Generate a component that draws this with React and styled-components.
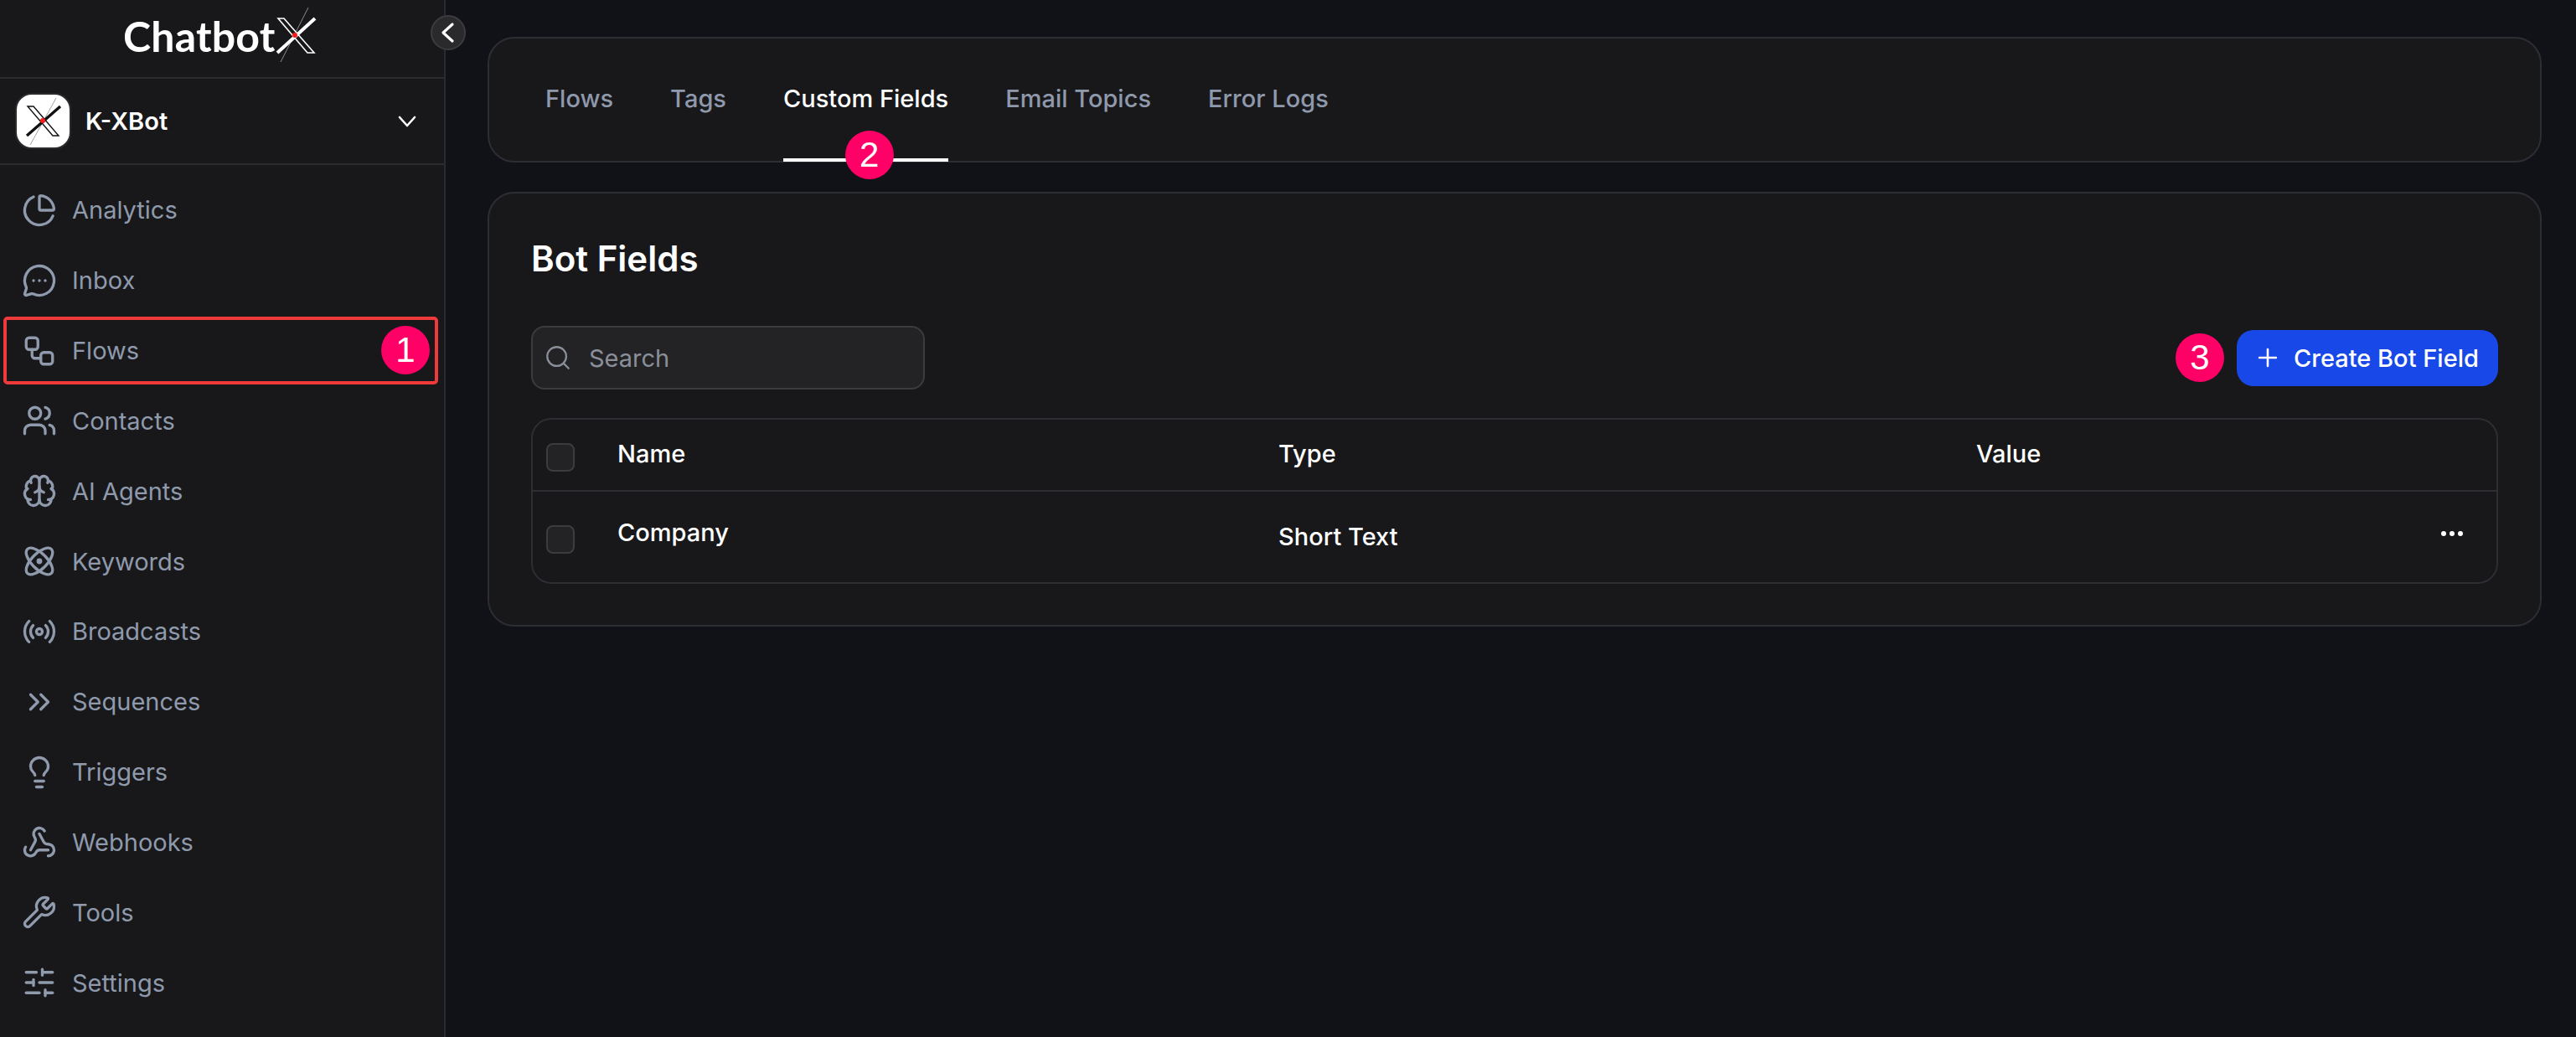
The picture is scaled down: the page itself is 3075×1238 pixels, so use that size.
import React from "react";
import styled, { createGlobalStyle } from "styled-components";
import {
  ChartPie, MessageCircleMore, Workflow, Users, Brain, Atom, Radio, ChevronsRight,
  Lightbulb, Webhook, Wrench, SlidersHorizontal, Search, Plus,
} from "lucide-react";

const Global = createGlobalStyle`
  html, body { margin: 0; padding: 0; background: #111218; }
  * { box-sizing: border-box; }
  body { font-family: "Inter", "Liberation Sans", sans-serif; }
`;

const Page = styled.div`
  display: flex;
  width: 100%;
  height: 100vh;
  overflow: hidden;
  background: #111218;
`;

const Sidebar = styled.aside`
  position: relative;
  flex: 0 0 532px;
  display: flex;
  flex-direction: column;
  background: #18181b;
  border-right: 2px solid #2a2b30;
`;

const LogoBar = styled.div`
  flex: 0 0 94px;
  display: flex;
  align-items: flex-start;
  padding: 13px 0 0 147px;
  border-bottom: 2px solid #2b2b2f;
`;

const LogoText = styled.span`
  font-family: "Lato", sans-serif;
  font-weight: 700;
  font-size: 50px;
  line-height: 60px;
  color: #ffffff;
  letter-spacing: 0.2px;
`;

const LogoMark = styled.svg`
  flex: none;
  margin: -6px 0 0 0;
`;

const CollapseButton = styled.div`
  position: absolute;
  top: 18px;
  left: 514px;
  width: 42px;
  height: 42px;
  border-radius: 50%;
  display: flex;
  align-items: center;
  justify-content: center;
  background: #2a2a2d;
  border: 2px solid #3c3c40;
  color: #ffffff;
  z-index: 2;
`;

const BotSwitcher = styled.div`
  flex: 0 0 103px;
  display: flex;
  align-items: center;
  padding: 0 28px 0 18px;
  border-bottom: 2px solid #2b2b2f;
`;

const Avatar = styled.div`
  flex: none;
  width: 67px;
  height: 67px;
  border: 2px solid #2b2b2f;
  border-radius: 20px;
  background: #ffffff;
  overflow: hidden;
  display: flex;
`;

const BotName = styled.span`
  flex: 1;
  margin-left: 17px;
  font-size: 29px;
  font-weight: 600;
  color: #ffffff;
`;

const Nav = styled.nav`
  display: flex;
  flex-direction: column;
  padding-top: 12px;
`;

const NavItem = styled.div`
  position: relative;
  height: 83.85px;
  display: flex;
  align-items: center;
  gap: 18px;
  padding-left: 26px;
  font-size: 29px;
  color: #8f9aac;
`;

const Highlight = styled.div`
  position: absolute;
  left: 4px;
  top: 1px;
  width: 519px;
  height: 81px;
  border: 4px solid #ef3a3c;
  border-radius: 5px;
  pointer-events: none;
`;

const Marker = styled.span`
  position: absolute;
  width: 58px;
  height: 58px;
  border-radius: 50%;
  background: #ff0066;
  color: #ffffff;
  font-family: "Liberation Sans", Arial, sans-serif;
  font-size: 42px;
  line-height: 58px;
  text-align: center;
  z-index: 3;
`;

const FlowMarker = styled(Marker)`
  left: 455px;
  top: 12px;
`;

const TabMarker = styled(Marker)`
  left: 50%;
  margin-left: -25px;
  bottom: -25px;
`;

const Main = styled.main`
  flex: 1;
  min-width: 0;
  display: flex;
  flex-direction: column;
  gap: 35px;
  padding: 44px 41px 0 50px;
`;

const TabsCard = styled.div`
  height: 150px;
  display: flex;
  gap: 68px;
  padding-left: 67px;
  background: #18181b;
  border: 2px solid #2d2e33;
  border-radius: 32px;
`;

const Tab = styled.div`
  position: relative;
  display: flex;
  align-items: center;
  margin-bottom: -1px;
  font-size: 29px;
  font-weight: 500;
  color: ${(p) => (p.$active ? "#ffffff" : "#8f99ab")};
  border-bottom: 4px solid ${(p) => (p.$active ? "#ffffff" : "transparent")};
`;

const FieldsCard = styled.section`
  height: 519px;
  padding: 56px 50px 0;
  background: #18181b;
  border: 2px solid #2d2e33;
  border-radius: 32px;
`;

const Title = styled.h1`
  margin: 0;
  font-size: 42px;
  line-height: 44px;
  font-weight: 600;
  color: #ffffff;
`;

const Toolbar = styled.div`
  margin-top: 58px;
  display: flex;
  align-items: center;
  justify-content: space-between;
`;

const SearchBox = styled.div`
  width: 470px;
  height: 76px;
  display: flex;
  align-items: center;
  gap: 20px;
  padding-left: 13px;
  background: #232326;
  border: 2px solid #3c3c40;
  border-radius: 16px;
  font-size: 29px;
  color: #8a8f99;
`;

const ToolbarEnd = styled.div`
  position: relative;
`;

const ButtonMarker = styled(Marker)`
  right: 327px;
  top: 4px;
`;

const CreateButton = styled.button`
  width: 312px;
  height: 67px;
  display: flex;
  align-items: center;
  gap: 14px;
  padding: 0 0 0 20px;
  border: 0;
  border-radius: 20px;
  background: #1849e8;
  color: #ffffff;
  font-family: inherit;
  font-size: 29px;
  font-weight: 500;
`;

const Table = styled.div`
  margin-top: 34px;
  height: 198px;
  border: 2px solid #2d2e33;
  border-radius: 24px;
`;

const Row = styled.div`
  display: grid;
  grid-template-columns: 101px 789px 833px 1fr 66px;
  align-items: center;
  height: ${(p) => p.$h}px;
  font-size: 29px;
  font-weight: ${(p) => (p.$head ? 500 : 450)};
  color: #ffffff;
  border-bottom: ${(p) => (p.$head ? "2px solid #2d2e33" : "0")};
`;

const Cell = styled.div`
  margin-top: ${(p) => p.$shift || 0}px;
`;

const Check = styled.div`
  width: 34px;
  height: 34px;
  margin: ${(p) => p.$shift}px 0 0 16px;
  background: #232326;
  border: 2px solid #3c3c40;
  border-radius: 8px;
`;

const Dots = styled.svg`
  display: block;
  margin-top: -8px;
`;

const NAV = [
  ["Analytics", ChartPie], ["Inbox", MessageCircleMore], ["Flows", Workflow], ["Contacts", Users],
  ["AI Agents", Brain], ["Keywords", Atom], ["Broadcasts", Radio], ["Sequences", ChevronsRight],
  ["Triggers", Lightbulb], ["Webhooks", Webhook], ["Tools", Wrench], ["Settings", SlidersHorizontal],
];

const TABS = ["Flows", "Tags", "Custom Fields", "Email Topics", "Error Logs"];

export default function App() {
  return (
    <Page>
      <Global />
      <Sidebar>
        <LogoBar>
          <LogoText>Chatbot</LogoText>
          <LogoMark width="50" height="70" viewBox="0 0 50 70" fill="none">
            <path d="M39 2 L6 67" stroke="#8a8a8a" strokeWidth="1" />
            <path d="M3 15 L10 15 L46 56 L38 56 Z" stroke="#ffffff" strokeWidth="1.6" fill="#18181b" />
            <path d="M2 56 L47 15" stroke="#ffffff" strokeWidth="4" />
            <circle cx="23" cy="35" r="3" fill="#ff1a1a" />
          </LogoMark>
        </LogoBar>
        <CollapseButton>
          <svg width="26" height="30" viewBox="0 0 26 30" fill="none" stroke="#ffffff" strokeWidth="3.2" strokeLinecap="round" strokeLinejoin="round">
            <path d="M18 5 L7 15 L18 25" />
          </svg>
        </CollapseButton>
        <BotSwitcher>
          <Avatar>
            <svg width="63" height="63" viewBox="0 0 63 63" fill="none">
              <path d="M47 4 L16 60" stroke="#8a8a8a" strokeWidth="0.8" />
              <path d="M13 14 L20 14 L50 49 L43 49 Z" stroke="#111111" strokeWidth="1.4" fill="#ffffff" />
              <path d="M12 49 L52 14" stroke="#111111" strokeWidth="3.4" />
              <circle cx="31" cy="31" r="3" fill="#ff1a1a" />
            </svg>
          </Avatar>
          <BotName>K-XBot</BotName>
          <svg width="32" height="32" viewBox="0 0 32 32" fill="none" stroke="#ffffff" strokeWidth="2.6" strokeLinecap="round" strokeLinejoin="round">
            <path d="M7 11 L16 21 L25 11" />
          </svg>
        </BotSwitcher>
        <Nav>
          {NAV.map(([label, Icon]) => (
            <NavItem key={label}>
              <Icon size={42} strokeWidth={1.9} />
              {label}
              {label === "Flows" && (
                <>
                  <Highlight />
                  <FlowMarker>1</FlowMarker>
                </>
              )}
            </NavItem>
          ))}
        </Nav>
      </Sidebar>
      <Main>
        <TabsCard>
          {TABS.map((t) => (
            <Tab key={t} $active={t === "Custom Fields"}>
              {t}
              {t === "Custom Fields" && <TabMarker>2</TabMarker>}
            </Tab>
          ))}
        </TabsCard>
        <FieldsCard>
          <Title>Bot Fields</Title>
          <Toolbar>
            <SearchBox>
              <Search size={34} strokeWidth={1.6} />
              Search
            </SearchBox>
            <ToolbarEnd>
              <ButtonMarker>3</ButtonMarker>
              <CreateButton>
                <Plus size={34} strokeWidth={1.8} />
                Create Bot Field
              </CreateButton>
            </ToolbarEnd>
          </Toolbar>
          <Table>
            <Row $head $h={86}>
              <Check $shift={6} />
              <Cell $shift={-3}>Name</Cell>
              <Cell $shift={-3}>Type</Cell>
              <Cell $shift={-3}>Value</Cell>
              <div />
            </Row>
            <Row $h={107}>
              <Check $shift={6} />
              <Cell $shift={-10}>Company</Cell>
              <Cell>Short Text</Cell>
              <div />
              <Dots width="26" height="6" viewBox="0 0 26 6" fill="#ffffff">
                <circle cx="3" cy="3" r="3" />
                <circle cx="13" cy="3" r="3" />
                <circle cx="23" cy="3" r="3" />
              </Dots>
            </Row>
          </Table>
        </FieldsCard>
      </Main>
    </Page>
  );
}
